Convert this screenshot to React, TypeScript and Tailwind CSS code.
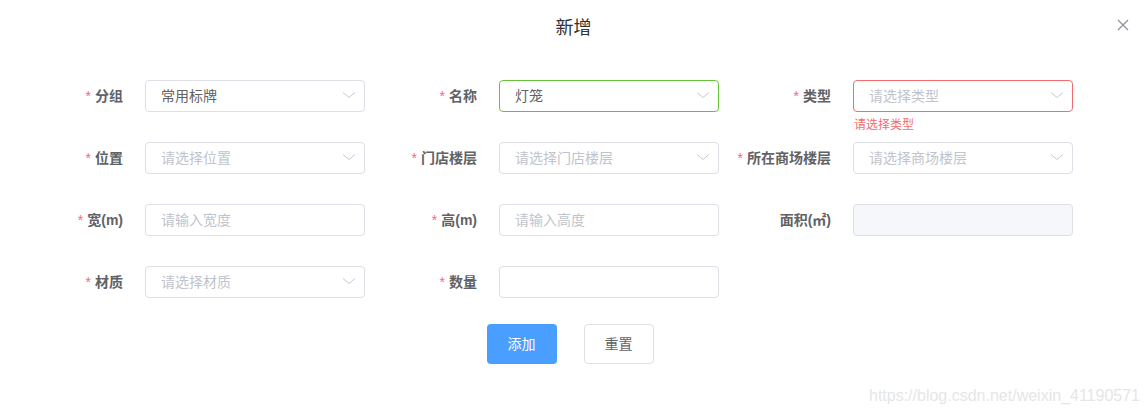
import React from "react";

type Field = {
  label: string;
  required?: boolean;
  value?: string;
  placeholder?: string;
  select?: boolean;
  state?: "ok" | "error" | "disabled";
  error?: string;
};

const rows: (Field | null)[][] = [
  [
    { label: "分组", required: true, value: "常用标牌", select: true },
    { label: "名称", required: true, value: "灯笼", select: true, state: "ok" },
    { label: "类型", required: true, placeholder: "请选择类型", select: true, state: "error", error: "请选择类型" },
  ],
  [
    { label: "位置", required: true, placeholder: "请选择位置", select: true },
    { label: "门店楼层", required: true, placeholder: "请选择门店楼层", select: true },
    { label: "所在商场楼层", required: true, placeholder: "请选择商场楼层", select: true },
  ],
  [
    { label: "宽(m)", required: true, placeholder: "请输入宽度" },
    { label: "高(m)", required: true, placeholder: "请输入高度" },
    { label: "面积(㎡)", state: "disabled" },
  ],
  [
    { label: "材质", required: true, placeholder: "请选择材质", select: true },
    { label: "数量", required: true },
    null,
  ],
];

function Chevron() {
  return (
    <svg width="14" height="8" viewBox="0 0 14 8" className="absolute right-[8px] top-[10px]">
      <path d="M1 1.5 L7 6.5 L13 1.5" fill="none" stroke="#C0C4CC" strokeWidth="0.9" />
    </svg>
  );
}

function FormItem({ f }: { f: Field }) {
  const border =
    f.state === "ok" ? "border-[#67C23A]" : f.state === "error" ? "border-[#F56C6C]" : "border-[#DCDFE6]";
  const bg = f.state === "disabled" ? "bg-[#F5F7FA]" : "bg-white";
  return (
    <div className="flex items-center">
      <div className="w-[100px] shrink-0 pr-[22px] flex justify-end text-[14px] font-bold text-[#606266] leading-8 whitespace-nowrap">
        {f.required && <span className="text-[#F56C6C] font-normal mr-[4px]">*</span>}
        <span>{f.label}</span>
      </div>
      <div className={`relative w-[220px] h-8 rounded-[4px] border ${border} ${bg}`}>
        <div className="px-[15px] leading-[30px] text-[14px]">
          {f.value ? (
            <span className="text-[#606266]">{f.value}</span>
          ) : (
            <span className="text-[#C0C4CC]">{f.placeholder}</span>
          )}
        </div>
        {f.select && <Chevron />}
        {f.error && (
          <div className="absolute left-0 top-[calc(100%+8px)] text-[12px] leading-none text-[#F56C6C]">
            {f.error}
          </div>
        )}
      </div>
    </div>
  );
}

export default function App() {
  return (
    <div
      className="relative w-[1147px] h-[412px] bg-white overflow-hidden"
      style={{ fontFamily: '"Liberation Sans", "Noto Sans CJK SC", sans-serif' }}
    >
      <div className="pt-[16px] text-center text-[18px] leading-6 text-[#303133]">新增</div>
      <svg width="12" height="12" viewBox="0 0 12 12" className="absolute top-[19px] right-[18px]">
        <path d="M1 1 L11 11 M11 1 L1 11" stroke="#909399" strokeWidth="1.3" />
      </svg>

      <div className="mt-[40px] pl-[45px] flex flex-col gap-[30px]">
        {rows.map((row, i) => (
          <div key={i} className="grid grid-cols-[354px_354px_354px]">
            {row.map((f, j) => (f ? <FormItem key={j} f={f} /> : <div key={j} />))}
          </div>
        ))}
      </div>

      <div className="mt-[26px] flex justify-center gap-[27px] pr-[7px]">
        <button className="w-[70px] h-10 rounded-[4px] bg-[#4A9EFF] text-white text-[14px]">添加</button>
        <button className="w-[70px] h-10 rounded-[4px] border border-[#DCDFE6] bg-white text-[#606266] text-[14px]">
          重置
        </button>
      </div>

      <div className="absolute right-[7px] bottom-[6px] text-[16px] leading-5 text-[#E6E6E6]">
        https://blog.csdn.net/weixin_41190571
      </div>
    </div>
  );
}
